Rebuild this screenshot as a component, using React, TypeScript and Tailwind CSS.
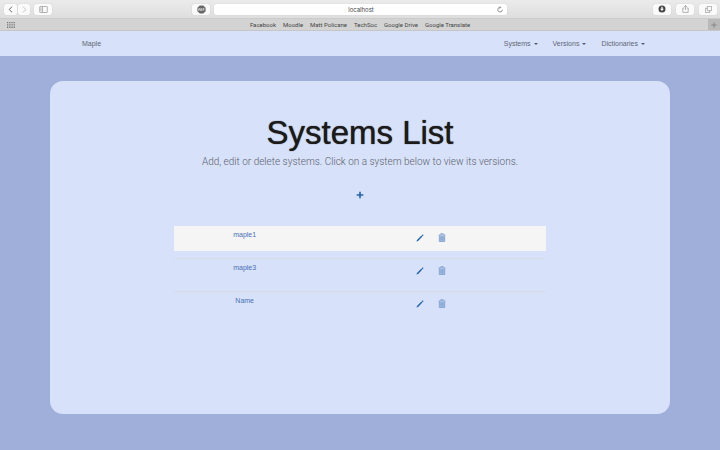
import type { ReactNode } from "react";

const bookmarks = ["Facebook", "Moodle", "Matt Policane", "TechSoc", "Google Drive", "Google Translate"];
const menus = ["Systems", "Versions", "Dictionaries"];
const systems = [
  { name: "maple1", active: true },
  { name: "maple3", active: false },
  { name: "Name", active: false },
];

function ToolButton({ label, className = "", children }: { label: string; className?: string; children: ReactNode }) {
  return (
    <button
      type="button"
      aria-label={label}
      className={`flex h-[11px] items-center justify-center rounded-[2px] bg-[#fafafa] shadow-[0_0_1px_#bbbbbb] ${className}`}
    >
      {children}
    </button>
  );
}

function BrowserChrome() {
  return (
    <header className="bg-[#d3d3d3] font-['Roboto',sans-serif] text-[6px] text-[#444444]">
      <div className="flex h-[18px] items-center justify-between bg-linear-to-b from-[#ebebeb] to-[#dedede] pr-[3px] pl-1">
        <div className="flex flex-1 items-center">
          <ToolButton label="Back" className="w-[13px]">
            <svg className="h-[7px] w-[5px]" viewBox="0 0 5 7" fill="none" stroke="#555" strokeWidth=".9">
              <path d="M4 .7 1.2 3.5 4 6.3" />
            </svg>
          </ToolButton>
          <ToolButton label="Forward" className="ml-px w-[12px]">
            <svg className="h-[7px] w-[5px]" viewBox="0 0 5 7" fill="none" stroke="#b5b5b5" strokeWidth=".8">
              <path d="M1 .7 3.8 3.5 1 6.3" />
            </svg>
          </ToolButton>
          <ToolButton label="Show sidebar" className="ml-1 w-[18px]">
            <svg className="h-[7px] w-[9px]" viewBox="0 0 9 7" fill="none" stroke="#959595" strokeWidth=".7">
              <rect x=".7" y=".5" width="7.6" height="6" rx=".5" />
              <path d="M3.5.5v6M1.4 2h1.3M1.4 3.4h1.3M1.4 4.8h1.3" />
            </svg>
          </ToolButton>
          <ToolButton label="Ad blocker" className="mr-1 ml-auto w-[18px]">
            <svg className="h-[9px] w-[9px]" viewBox="0 0 9 9">
              <path d="M2.8.4h3.4l2.4 2.4v3.4L6.2 8.6H2.8L.4 6.2V2.8z" fill="#666" />
              <path d="M1.3 5.8 2.2 3.2l.9 2.6M3.8 3.3v2.4h.5q.8-.2.4-1.2.1-1-.9-1.2M6.1 5.8V3.3h.7q.9.7 0 1.4h-.7" fill="none" stroke="#eee" strokeWidth=".7" />
            </svg>
          </ToolButton>
        </div>
        <div className="flex h-[11px] w-[41%] items-center rounded-[2px] bg-white px-1 shadow-[0_0_1px_#bbbbbb]">
          <input
            aria-label="Address"
            defaultValue="localhost"
            className="w-full min-w-0 flex-1 bg-transparent pt-px pl-[7px] text-center font-['Inter',sans-serif] text-[6px] outline-none"
          />
          <button type="button" aria-label="Reload">
            <svg className="h-[7px] w-[6px]" viewBox="0 0 6 7" fill="none" stroke="#666" strokeWidth=".7">
              <path d="M3.3 1.4A2.3 2.3 0 1 0 5.4 3.7M2.7.3l1.2 1.1-1.2 1.2" />
            </svg>
          </button>
        </div>
        <div className="flex flex-1 items-center justify-end gap-[5px]">
          <ToolButton label="Downloads" className="w-[18px]">
            <svg className="h-[8px] w-[8px]" viewBox="0 0 8 8">
              <circle cx="4" cy="4" r="3.5" fill="#454545" />
              <path d="M3.4 1.8h1.2v2h1.3L4 6.1 2.1 3.8h1.3z" fill="#fff" />
            </svg>
          </ToolButton>
          <ToolButton label="Share" className="w-[18px]">
            <svg className="h-[8px] w-[7px]" viewBox="0 0 7 8" fill="none" stroke="#858585" strokeWidth=".6">
              <path d="M2.3 3H.8v4.4h5.4V3H4.7M3.5 5V.6M2.1 2 3.5.6 4.9 2" />
            </svg>
          </ToolButton>
          <ToolButton label="Show all tabs" className="w-[18px]">
            <svg className="h-[7px] w-[7px]" viewBox="0 0 7 7" fill="none" stroke="#858585" strokeWidth=".6">
              <path d="M2.3 2.3H.4v4.3h4.3V4.7M2.3.4h4.3v4.3H2.3z" />
            </svg>
          </ToolButton>
        </div>
      </div>
      <div className="flex h-[13px] items-center border-t border-b border-t-[#cbcbcb] border-b-[#c6c6c6]">
        <button type="button" aria-label="Show favourites" className="ml-[7px] w-[8px]">
          <svg className="h-[6px] w-[8px]" viewBox="0 0 8 6" fill="#777">
            <path d="M0 0h1.3v1.3H0zm2.2 0h1.3v1.3H2.2zm2.2 0h1.3v1.3H4.4zm2.2 0h1.3v1.3H6.6zM0 2.3h1.3v1.3H0zm2.2 0h1.3v1.3H2.2zm2.2 0h1.3v1.3H4.4zm2.2 0h1.3v1.3H6.6zM0 4.6h1.3v1.3H0zm2.2 0h1.3v1.3H2.2zm2.2 0h1.3v1.3H4.4zm2.2 0h1.3v1.3H6.6z" />
          </svg>
        </button>
        <nav aria-label="Bookmarks" className="flex flex-1 justify-center gap-[7px] pr-[3px]">
          {bookmarks.map((name) => (
            <a key={name} href="#">{name}</a>
          ))}
        </nav>
        <button type="button" aria-label="New tab" className="flex h-full w-[12px] items-center justify-center bg-[#b9b9b9]">
          <svg className="h-[6px] w-[6px]" viewBox="0 0 6 6" stroke="#777" strokeWidth=".7">
            <path d="M3 .3v5.4M.3 3h5.4" />
          </svg>
        </button>
      </div>
    </header>
  );
}

function PencilIcon() {
  return (
    <svg className="h-[8px] w-[8px]" viewBox="0 0 8 8" fill="#2464ab">
      <path d="m.4 7.6.6-1.7L5.4 1.6l1 1L2.1 7zM5.8 1.2l.6-.6q.3-.2.5 0l.5.5q.2.3 0 .5l-.6.6z" />
    </svg>
  );
}

function TrashIcon() {
  return (
    <svg className="h-[9px] w-[8px]" viewBox="0 0 8 9">
      <path d="M1.3 2.5h5.4v6H1.3z" fill="#a5bbdf" />
      <path d="M.6 1.9h6.8M2.8 1.8V.6h2.4v1.2M1.3 2.2v6.3h5.4V2.2M3.1 3.3v4.1M4.9 3.3v4.1" fill="none" stroke="#7398cb" strokeWidth=".7" />
    </svg>
  );
}

export default function App() {
  return (
    <div className="flex min-h-screen flex-col bg-[#a0afd9] font-['Liberation_Sans',Arial,sans-serif] text-[7px] leading-[10px]">
      <BrowserChrome />
      <nav aria-label="Main" className="flex h-[25px] items-center justify-between bg-[#d7e1f9] pr-[75px] pl-[82px] text-[#606677]">
        <a href="#">Maple</a>
        <div className="flex gap-[15px]">
          {menus.map((name) => (
            <button key={name} type="button" className="flex items-center gap-[3px]">
              {name}
              <svg className="h-[2px] w-[4px]" viewBox="0 0 4 2" fill="#555b6b">
                <path d="M0 0h4L2 2z" />
              </svg>
            </button>
          ))}
        </div>
      </nav>
      <main className="mx-[50px] mt-[25px] mb-[36px] flex flex-1 flex-col items-center rounded-[13px] bg-[#d7e1f9] pt-[34px]">
        <h1 className="text-[33px] leading-[36px] text-[#1c1a1b] [text-shadow:0_0_1px_#1c1a1b]">Systems List</h1>
        <p className="mt-[4px] font-['Roboto',sans-serif] text-[10px] leading-[14px] font-light text-[#5d6270]">
          Add, edit or delete systems. Click on a system below to view its versions.
        </p>
        <button type="button" aria-label="Add system" className="mt-[22px]">
          <svg className="h-[8px] w-[8px]" viewBox="0 0 8 8" fill="#2464ab">
            <path d="M3.2.7h1.6v2.5h2.5v1.6H4.8v2.5H3.2V4.8H.7V3.2h2.5z" />
          </svg>
        </button>
        <table aria-label="Systems" className="mt-[26px] w-3/5 table-fixed border-collapse text-center text-[#4a70b5]">
          <colgroup>
            <col className="w-[38%]" />
            <col className="w-[62%]" />
          </colgroup>
          <tbody>
            {systems.map(({ name, active }) => (
              <tr key={name} className={`h-[33px] border-t align-top ${active ? "border-transparent" : "border-[#d6dbe6]"}`}>
                <td className="p-0">
                  <div className={`h-[25px] pt-[4px] ${active ? "bg-[#f5f5f5]" : ""}`}>
                    <a href="#">{name}</a>
                  </div>
                </td>
                <td className="p-0">
                  <div className={`flex h-[25px] items-center gap-[14px] pb-[2px] pl-[101px] ${active ? "bg-[#f5f5f5]" : ""}`}>
                    <button type="button" aria-label={`Edit ${name}`}><PencilIcon /></button>
                    <button type="button" aria-label={`Delete ${name}`}><TrashIcon /></button>
                  </div>
                </td>
              </tr>
            ))}
          </tbody>
        </table>
      </main>
    </div>
  );
}
